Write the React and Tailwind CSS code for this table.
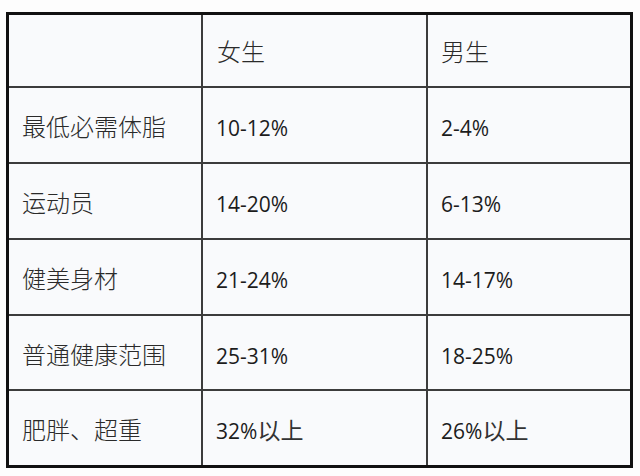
import React from "react";

const rows = [
  ["最低必需体脂", ["10-12%", ""], ["2-4%", ""]],
  ["运动员", ["14-20%", ""], ["6-13%", ""]],
  ["健美身材", ["21-24%", ""], ["14-17%", ""]],
  ["普通健康范围", ["25-31%", ""], ["18-25%", ""]],
  ["肥胖、超重", ["32%", "以上"], ["26%", "以上"]],
];

function Cell({ children, className = "" }) {
  return (
    <div className={"bg-[#f9fafc] flex items-center pl-[13px] text-[24px] text-[#1c1c1c] leading-none " + className}>
      {children}
    </div>
  );
}

function Num({ v }) {
  return (
    <span className="pt-[4px]">
      <span className="text-[21px]">{v[0]}</span>
      {v[1] && <span className="text-[23px] text-[#333]">{v[1]}</span>}
    </span>
  );
}

export default function App() {
  return (
    <div
      className="w-[640px] h-[476px] bg-[#fdfdfd] pl-[6px] pt-[12px]"
      style={{ fontFamily: '"Open Sans", "Noto Sans CJK SC", sans-serif' }}
    >
      <div className="w-[627px] h-[456px] border-[3px] border-[#111] bg-[#3c3c3c] grid grid-cols-[192px_223px_1fr] grid-rows-[71px_74px_74px_74px_73px_1fr] gap-[2px]">
        <Cell />
        <Cell className="pt-[3px] pl-[14px] text-[#2a2a2a] font-light">女生</Cell>
        <Cell className="pt-[3px] text-[#2a2a2a] font-light">男生</Cell>
        {rows.map((r, i) => (
          <React.Fragment key={i}>
            <Cell className="pl-[12px] pt-[4px] text-[#2a2a2a] font-light">{r[0]}</Cell>
            <Cell><Num v={r[1]} /></Cell>
            <Cell><Num v={r[2]} /></Cell>
          </React.Fragment>
        ))}
      </div>
    </div>
  );
}
